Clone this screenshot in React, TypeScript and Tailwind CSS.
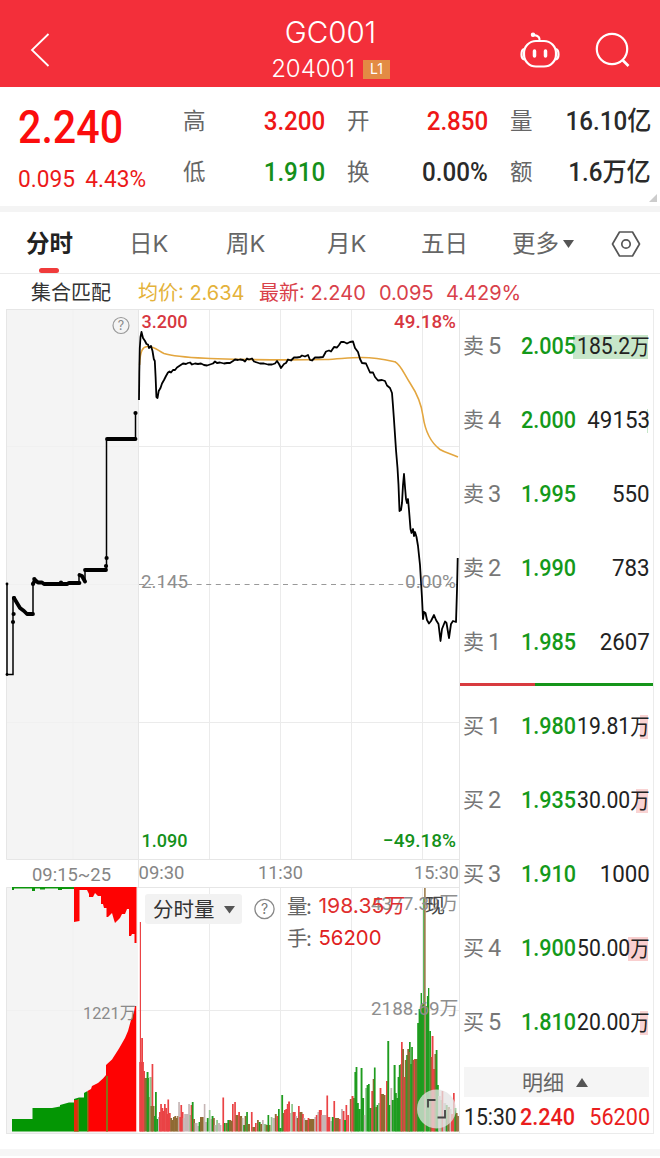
import React from "react";

const UI = "font-['Inter','Noto_Sans_CJK_SC',sans-serif]";
const NUM = "font-['Roboto','Noto_Sans_CJK_SC',sans-serif]";

const BAR_COLORS: Record<string, string> = {
  r: "#ea4345",
  g: "#1f9c1f",
  b: "#8f6a33",
  n: "#c6b6b6",
  l: "#8fc88f",
};

/* x, top, width, colour */
type Bar = [number, number, number, string];

const volumeBars: Bar[] = [
  [139.2, 1062, 4.2, "r"], [139.8, 922, 1.2, "r"], [141.2, 1038, 1.3, "r"], [143.2, 1071, 1.3, "r"],
  [144.3, 1078, 2.6, "b"], [146.6, 1072, 1.4, "g"], [148, 1097, 1.6, "b"], [149.4, 1077, 1.8, "l"],
  [147, 1078, 1.4, "g"], [151.6, 1064, 1.2, "r"], [150.4, 1106, 3.6, "b"], [155, 1092, 1.3, "g"],
  [154, 1116, 1.4, "g"], [156.3, 1119, 1.7, "g"], [158, 1117, 1.4, "n"], [159, 1112, 1.4, "r"],
  [160.2, 1104, 1.2, "r"], [161.3, 1108, 1.5, "r"], [162.8, 1111, 1.4, "r"], [164, 1104, 1.2, "r"],
  [165.2, 1108, 1.5, "r"], [166.6, 1114, 1.3, "r"], [167.4, 1099.5, 1.2, "r"], [168.6, 1113, 1.6, "r"],
  [170.2, 1118, 1.4, "b"], [171.6, 1120, 1.4, "b"], [173, 1117, 1.4, "b"], [174.4, 1116, 1.4, "b"],
  [175.8, 1118, 1.4, "b"], [177.2, 1116, 1.3, "b"], [178.2, 1102, 1.2, "n"], [179.3, 1117, 1.4, "r"],
  [180.4, 1105, 1.2, "r"], [181.6, 1112, 1.4, "r"], [182.8, 1118, 1.4, "n"], [184.2, 1114, 4, "n"],
  [188.2, 1104, 1.2, "n"], [189.4, 1115, 1.4, "l"], [190.6, 1105, 1.2, "r"], [191.8, 1102, 1.3, "g"],
  [193.1, 1119, 1.4, "b"], [194.5, 1123, 2.6, "n"], [197.2, 1126, 1.4, "n"], [198.6, 1122, 1.4, "g"],
  [200, 1117, 3.2, "b"], [203.8, 1104, 1.1, "n"], [205, 1122, 1.5, "n"], [206.8, 1118, 1.4, "g"],
  [208.8, 1110, 1.2, "l"], [210.2, 1119, 1.4, "n"], [211.6, 1116, 1.4, "g"], [213, 1118, 1.3, "b"],
  [214.4, 1125, 1.8, "n"], [216.2, 1120, 1.3, "l"], [217.6, 1123, 2, "n"], [219.6, 1125, 1.3, "n"],
  [222.4, 1097.5, 1.2, "r"], [224, 1123, 1.2, "g"], [225.8, 1123, 1.5, "b"], [227.4, 1120, 1.5, "g"],
  [229, 1120, 1.8, "b"], [232, 1104, 1.2, "r"], [231, 1121, 1.2, "b"], [234.2, 1102, 1.2, "r"],
  [235.6, 1115, 2.6, "b"], [238.2, 1112, 1.3, "r"], [239.6, 1116, 2, "b"], [241.8, 1118, 1.2, "n"],
  [243.2, 1125, 1.4, "g"], [244.6, 1116, 1.3, "b"], [246.2, 1112, 1.2, "g"], [247.5, 1124, 2, "b"],
  [250.9, 1112, 1.2, "r"], [252.3, 1127, 2.6, "b"], [255, 1123, 1.2, "r"], [257, 1120, 1.3, "b"],
  [258.7, 1122, 1.4, "g"], [260.2, 1124, 1.3, "b"], [262, 1120, 1.2, "n"], [263.6, 1124, 2.4, "l"],
  [265.6, 1125, 4.5, "b"], [267.5, 1115, 1.2, "g"], [270.7, 1117, 1.2, "l"], [272.4, 1118, 2, "n"],
  [274.8, 1114, 1.4, "b"], [276.4, 1116, 1.4, "r"], [278, 1109, 1.2, "g"], [279.3, 1128, 1.7, "g"],
  [281.3, 1095, 1.3, "g"], [282.7, 1113, 1.3, "b"], [284, 1110, 1.4, "r"], [285.4, 1109, 1.6, "r"],
  [286.8, 1104, 1.2, "r"], [288.1, 1101.5, 1.4, "r"], [290, 1113, 1.2, "n"], [291.2, 1104, 1.3, "l"],
  [292.6, 1112, 2.6, "r"], [295.4, 1116, 1.3, "n"], [296.7, 1118, 1.3, "b"], [298, 1106, 1.2, "r"],
  [299.3, 1112, 2.7, "b"], [302, 1114, 1.3, "r"], [303.4, 1118, 1.3, "n"], [304.8, 1120, 2.7, "b"],
  [307.6, 1118, 1.3, "r"], [309, 1119, 5.2, "b"], [314.4, 1117, 1.3, "n"], [315.8, 1115, 1.4, "r"],
  [317.4, 1112, 1.4, "n"], [318.8, 1110, 2.6, "r"], [321.4, 1115, 4.6, "n"], [326.4, 1095.5, 1.2, "r"],
  [327.8, 1117, 2, "r"], [330, 1121, 1.8, "n"], [333.4, 1101, 1.2, "r"], [331.8, 1117, 1.4, "g"],
  [335, 1118, 3.6, "b"], [338.8, 1119, 1.4, "r"], [341, 1109, 1.4, "n"], [342.6, 1111, 1.4, "r"],
  [345.5, 1105, 1.2, "r"], [344.1, 1120, 1.4, "g"], [347.2, 1115, 1.3, "r"], [349.8, 1099, 1.4, "b"],
  [351.5, 1096, 1.5, "r"], [353, 1098, 1.4, "b"], [354.4, 1072, 1.2, "g"], [355.6, 1067, 1.3, "g"],
  [356.9, 1103, 1.4, "g"], [358.2, 1109, 2, "g"], [360.6, 1068, 1.4, "g"], [362, 1098, 1.6, "g"],
  [363.8, 1115, 1.4, "n"], [365.2, 1088, 1.4, "l"], [366.6, 1085, 1.4, "g"], [368, 1084, 1.2, "g"],
  [369.3, 1108, 2, "g"], [371.3, 1091, 1.3, "r"], [372.7, 1079, 1.3, "b"], [373.9, 1067.5, 1.2, "g"],
  [375.2, 1107, 1.4, "b"], [376.6, 1105, 1.4, "g"], [378, 1103, 1.4, "l"], [379.6, 1088, 1.3, "r"],
  [380.9, 1094, 2.6, "b"], [383.5, 1095, 1.5, "b"], [386, 1081, 1.3, "r"], [387.3, 1041, 1.4, "g"],
  [388.7, 1105, 1.4, "g"], [390.4, 1088, 1.3, "n"], [391.8, 1100, 1.5, "g"], [393.6, 1065, 1.5, "g"],
  [395, 1093, 1.3, "g"], [396.3, 1098, 1.4, "g"], [397.6, 1077, 1.3, "g"], [398.8, 1065, 1.5, "g"],
  [400.3, 1064, 1.2, "b"], [401, 1042, 1.2, "r"], [402.1, 1049, 1.4, "b"], [403.4, 1077, 1.6, "r"],
  [404.8, 1060, 1.4, "b"], [406.2, 1055, 1.3, "g"], [407.3, 1049, 1.4, "b"], [409, 1042, 1.2, "g"],
  [408.3, 1052, 1.2, "b"], [410.2, 1064, 1.2, "g"], [411.2, 1047, 1.2, "g"], [412.4, 1060, 1.5, "b"],
  [413.8, 1059, 1.3, "r"], [415, 1059, 2.4, "b"], [417.2, 1023, 1.6, "g"], [418.6, 1009, 2, "g"],
  [420.6, 993, 1.4, "g"], [421.8, 1004, 1.6, "g"], [423.3, 897, 1, "g"], [424.2, 888, 1.4, "b"],
  [425.7, 1006, 1.2, "g"], [426.9, 996, 1.2, "g"], [428, 988, 1.3, "g"], [429.2, 1031, 1.3, "g"],
  [430.3, 1057, 1.2, "b"], [431.6, 1036, 1.4, "r"], [432.8, 1069, 1.8, "r"], [434.4, 1054, 1.4, "b"],
  [435.7, 1050, 1.3, "g"], [437, 1085, 1.3, "g"], [438.2, 1096, 2, "n"], [440.2, 1100, 1.4, "l"],
  [441.6, 1091, 1.2, "r"], [442.9, 1103, 2.8, "n"], [445.7, 1105, 1.5, "g"], [447.3, 1107, 2.2, "b"],
  [449.5, 1109, 1.5, "n"], [451, 1114, 1.6, "r"], [453, 1093, 1.2, "r"], [454.3, 1108, 1.4, "g"],
  [455.7, 1113, 1.4, "b"], [457.2, 1116, 1.2, "b"],
];

const priceLine =
  "139,400 139.3,372 139.8,348 140.5,337 141.5,332 143,338 145,341 146.5,344 148,344.5 149,348 151,346 152.5,351 153.8,359 154.8,361 155.6,377 156.4,397 157.5,398 158.7,391 160.5,388 162,383.5 164,380 166,376 168,372.5 169.5,371.5 171,372.5 173,370 175,370 177,367.5 180,365.5 183,363.5 186,364 188,363 190,362.5 192,364.5 195,363.5 198,364 201,363.5 204,365 207,365.5 210,364.5 213,363.5 215,361.5 217,363 220,362.5 224,363.5 227,363 230,363 233,361 235,359.5 238,360 240,359.5 243,360 245,361.5 247,358.5 249,359.5 252,358.5 254,361.5 257,362.5 260,363.5 264,363.5 268,364.5 272,364.5 275,363.5 277,361 279,364 281,368 284,364 286,363 288,359.5 291,360.5 294,357.5 297,357.5 300,357 302,355.5 305,356.5 308,355 310,360 312,360.5 315,357.5 319,357.5 323,357 326,351.5 329,350.5 331,351.5 334,347 337,347.5 339,345 341,342 344,342 347,343.5 350,342 353,341.5 355,348 358,352 360,359 362,363 366,363.5 368,368 370,372.5 373,372.5 375,377 378,380.5 382,380 385,381 387,385.5 390,388 392,393 393,406 394,420 396,450 397.5,468 398.5,485 399.5,511 401,510 402,503 403,485 404,474 405,487 406,499 407,503 408,499 409,510 410.5,529 411.5,533 413,529 414,536 415,532 416.5,537 418,546 420,565 422,598 423,619 424,612 425.5,613 427,620 429,623.5 431,621 434,615 436,620 438.5,624 440.5,641 442,629 445,621.5 446.5,623 449,638 451,624 453,621 456,622 457,590 457.7,558";

const avgLine =
  "M139.6 365C140 350 143 347 147 346.5C155 346 158 351 164 353.5C175 357 190 357.5 210 358.5C240 359.5 300 360 325 359.5C340 359 348 357.5 362 357.5C377 357.5 387 360 395 361.8C401 365 404 374 410 383C416 392 421 401 423 416C426 437 434 445 440 449.5C446 453 450 453.5 458 457";

function Label(props: {
  x: number; y: number; w: number; size: number; fill: string; children: string; weight?: number;
}) {
  return (
    <text
      x={props.x}
      y={props.y}
      textLength={props.w}
      lengthAdjust="spacingAndGlyphs"
      fontSize={props.size}
      fontWeight={props.weight ?? 400}
      fill={props.fill}
      className="font-['Roboto','Noto_Sans_CJK_SC',sans-serif]"
    >
      {props.children}
    </text>
  );
}

function Chart() {
  const dots = [[7, 584], [7, 674.5], [13, 622], [13.6, 614], [14, 598], [33, 584], [34.3, 579], [61, 582.5], [106, 566], [106.6, 558], [135.5, 413]];
  return (
    <svg width="460" height="826" viewBox="0 309 460 826" className="block shrink-0">
      <rect x="6" y="309" width="132" height="550" fill="#f4f4f4" />
      <rect x="6" y="887" width="132" height="246" fill="#f4f4f4" />
      <g stroke="#ebebeb" strokeWidth="1" fill="none">
        <path d="M138 446.5H459M138 722.5H459M138 1010.5H459M209.5 309V859M280.5 309V859M351.5 309V859M422.5 309V859M209.5 887V1133M280.5 887V1133M351.5 887V1133M422.5 887V1133" />
        <path d="M6 446.5H138M6 584.5H138M6 722.5H138M6 1010.5H138M73 309V859M73 887V1133" stroke="#f0f0f0" />
        <path d="M6.5 309V859.5H460M6 309.5H460M6.5 1133V887.5H460M6 1133.5H460M138.5 309V887M459.5 309V1133" stroke="#e6e6e6" />
      </g>

      <path d="M139 584.5H458" stroke="#999" strokeWidth="1.2" strokeDasharray="5 4.6" />
      <path d={avgLine} fill="none" stroke="#e3a63f" strokeWidth="1.6" />
      <polyline points={priceLine} fill="none" stroke="#000" strokeWidth="1.8" strokeLinejoin="round" />

      <path d="M7 584V674.5H13V598M33 614V583M79 582V575M85 581V570M106.5 570V439M135.5 439V413" fill="none" stroke="#000" strokeWidth="1.5" />
      <path d="M14 598L17 603L20 608L24 611L27 614H33M33.5 583L35 580L38 582.5H42L44 584H67L69 583H79.5M79.5 575L82 576L85 581.5M85 570H106M107 439H135.5" fill="none" stroke="#000" strokeWidth="3.8" strokeLinejoin="round" strokeLinecap="round" />
      {dots.map(([x, y], i) => <circle key={i} cx={x} cy={y} r={i < 2 ? 1.4 : 2.1} />)}

      <circle cx="121" cy="325.5" r="8" fill="none" stroke="#999" strokeWidth="1.2" />
      <text x="121" y="330" textAnchor="middle" fontSize="12.5" fill="#888" className="font-['Inter',sans-serif]">?</text>

      <Label x={141.5} y={328} w={46} size={19} fill="#d7373f" weight={500}>3.200</Label>
      <Label x={394} y={328} w={62} size={19} fill="#d7373f" weight={500}>49.18%</Label>
      <Label x={141} y={587.5} w={47} size={19} fill="#8e8e8e">2.145</Label>
      <Label x={405} y={587.5} w={51} size={19} fill="#8e8e8e">0.00%</Label>
      <Label x={141.5} y={847} w={46} size={19} fill="#14911a" weight={500}>1.090</Label>
      <Label x={383} y={847} w={73} size={19} fill="#14911a" weight={500}>−49.18%</Label>
      <Label x={32} y={881} w={79} size={19} fill="#858585">09:15~25</Label>
      <Label x={138.5} y={879} w={46} size={19} fill="#858585">09:30</Label>
      <Label x={258} y={879} w={45} size={19} fill="#858585">11:30</Label>
      <Label x={414} y={879} w={45} size={19} fill="#858585">15:30</Label>

      <path d="M12 887H75V889H62V890H58V888.5H45V889.5H40V888.5H35V891H32V888.5H14V890H12Z" fill="#0c950c" />
      <path d="M74 887H136.5V943H134.5V934H132L131 936H129V909H127L125 914H122L120 918L117 921L115 923L114 920L112 913L108 917H106.500V908H104L103 904H101V896H98L95 893L93 897H89V894L87 890H79.500V921L74 922Z" fill="#fe0202" />
      <path d="M12 1131.500V1119H32.500V1108H52L60 1106.500V1105L69 1102.500H74V1099L79 1097.500H84V1093L87.500 1091V1131.500Z" fill="#049604" />
      <path d="M87.500 1131.500V1091L91 1089L92 1086L98 1083L103 1078.500L106 1075V1065L112 1059.500L119 1048.500L125 1038L128 1031L131 1020L134 1012L135 1006H136.500V1131.500Z" fill="#fe0202" />
      <path d="M74 1100H78V1131.500H74Z" fill="#e5290b" />
      <path d="M106 1076H108V1131.500H106ZM87 1092H88.500V1131.500H87ZM77.600 1099H79V1131.500H77.600Z" fill="#887016" />
      <path d="M137 1006V1133" stroke="#fff" strokeWidth="1" />
      {volumeBars.map(([x, y, w, c], i) => (
        <rect key={i} x={x} y={y} width={w + (y > 1000 ? 0.5 : 0)} height={1131.5 - y} fill={BAR_COLORS[c]} />
      ))}

      <rect x="145" y="894" width="97" height="30" rx="3" fill="#f2f2f2" />
      <Label x={153} y={917} w={61.5} size={20.5} fill="#333">分时量</Label>
      <path d="M224 906H235L229.500 913.500Z" fill="#555" />
      <circle cx="264.500" cy="909" r="9.600" fill="none" stroke="#888" strokeWidth="1.3" />
      <text x="264.500" y="914" textAnchor="middle" fontSize="14" fill="#777" className="font-['Inter',sans-serif]">?</text>

      <Label x={83} y={1019} w={53} size={17} fill="#8a8a8a">1221万</Label>
      <Label x={371} y={909.5} w={87.5} size={19} fill="#8e8e8e">4377.39万</Label>
      <Label x={371} y={1014.5} w={87.500} size={19} fill="#8e8e8e">2188.69万</Label>
      <g className="font-['Inter','Noto_Sans_CJK_SC',sans-serif]" fontSize="20.500">
        <text x="287" y="914" fill="#666" textLength="25">量:</text>
        <text x="318.500" y="913" fill="#df2e2e" textLength="87" lengthAdjust="spacingAndGlyphs">198.35万</text>
        <text x="425" y="913" fill="#444" fontSize="20">现</text>
        <text x="287" y="946" fill="#666" textLength="25">手:</text>
        <text x="318.500" y="945" fill="#df2020" textLength="63" lengthAdjust="spacingAndGlyphs">56200</text>
      </g>

      <circle cx="436.500" cy="1109" r="19.500" fill="#e3e3e3" fillOpacity="0.76" />
      <path d="M428 1107.500V1100H435.500M445 1110V1117.500H437.500" fill="none" stroke="#444" strokeWidth="1.8" />
    </svg>
  );
}

type Order = [string, string, string, string];
const sells: Order[] = [
  ["卖", "5", "2.005", "185.2万"], ["卖", "4", "2.000", "49153"], ["卖", "3", "1.995", "550"],
  ["卖", "2", "1.990", "783"], ["卖", "1", "1.985", "2607"],
];
const buys: Order[] = [
  ["买", "1", "1.980", "19.81万"], ["买", "2", "1.935", "30.00万"], ["买", "3", "1.910", "1000"],
  ["买", "4", "1.900", "50.00万"], ["买", "5", "1.810", "20.00万"],
];
const depth: Record<string, string> = {
  "2.005": "w-[75px] bg-[#c7e6c9]",
  "2.000": "w-[1px] bg-[#c7e6c9]",
  "1.980": "w-[8px] bg-[#f9d3d3]",
  "1.935": "w-[12px] bg-[#f9d3d3]",
  "1.900": "w-[20px] bg-[#f9cfcf]",
  "1.810": "w-[8px] bg-[#f9d3d3]",
};

function OrderRow({ o }: { o: Order }) {
  const wan = o[3].endsWith("万");
  return (
    <div className="relative flex h-[74px] items-center pl-[3px] pr-[3px]">
      {depth[o[2]] && <span className={`absolute right-[5px] top-[25px] h-[24px] ${depth[o[2]]}`} />}
      <span className="relative flex w-[58px] shrink-0 items-center text-[#777]">
        <span className={`${UI} pb-[3px] text-[21px] leading-none`}>{o[0]}</span>
        <span className={`${NUM} ml-[4px] text-[23.5px] leading-none`}>{o[1]}</span>
      </span>
      <span className={`${NUM} relative w-[56px] shrink-0 origin-left scale-x-[0.92] whitespace-nowrap text-[23.5px] font-medium leading-none text-[#14991a]`}>{o[2]}</span>
      <span className={`${NUM} relative ml-auto w-0 text-[23.5px] leading-none text-[#222]`}>
        <span className={`float-right origin-right whitespace-nowrap ${wan ? "scale-x-[0.9]" : "scale-x-[0.95]"}`}>
          {wan ? o[3].slice(0, -1) : o[3]}{wan && <span className="text-[21.5px]">万</span>}
        </span>
      </span>
    </div>
  );
}

function Stat({ label, value, color }: { label: string; value: string; color: string }) {
  return (
    <div className="flex h-[51px] items-center justify-between">
      <span className={`${UI} pt-[2px] text-[22.5px] leading-none text-[#666]`}>{label}</span>
      <span className={`${NUM} origin-right scale-x-[0.93] whitespace-nowrap text-[26px] font-medium leading-none ${color}`}>{value}</span>
    </div>
  );
}

export default function App() {
  return (
    <div className={`${UI} flex h-[1158px] w-[660px] flex-col overflow-hidden bg-white`}>
      <header className="flex h-[87px] shrink-0 items-center justify-between bg-[#f32f3a] pl-[29px] pr-[28px]">
        <svg width="110" height="40" viewBox="0 -1 110 40" fill="none" stroke="#fff" strokeWidth="1.8" className="overflow-visible">
          <path d="M19.500 9L3 25L19.500 41" />
        </svg>
        <div className="flex flex-col items-center pl-[2px] pt-[11px] text-white">
          <div className="text-[29.5px] font-light leading-[36px]">GC001</div>
          <div className="flex items-center gap-[8px] pt-[4px] leading-[30px]">
            <span className="text-[24px] font-light">204001</span>
            <span className="flex h-[19px] w-[27px] items-center justify-center bg-[#e38b44] text-[14px] leading-none">L1</span>
          </div>
        </div>
        <svg width="112" height="50" viewBox="520 18.500 112 50" fill="none" stroke="#fff" strokeWidth="2.200">
          <rect x="524" y="40.500" width="32" height="25.500" rx="12" />
          <path d="M539.500 40.500Q540.500 35.500 534 34.500" />
          <circle cx="533" cy="34.300" r="1.500" fill="#fff" stroke="#fff" strokeWidth="1.500" />
          <path d="M524 48.500Q521.500 49 521.500 54Q521.500 58.500 524.500 59M556 48.500Q558.500 49 558.500 54Q558.500 58.500 555.500 59" />
          <path d="M534.500 50.500V55.500M545.500 50.500V55.500" strokeWidth="3.500" strokeLinecap="round" />
          <circle cx="612" cy="48.500" r="15.200" />
          <path d="M622.500 59.500L628.500 65.500" strokeWidth="2.600" />
        </svg>
      </header>

      <section className="relative flex h-[119px] shrink-0 pl-[18px]">
        <div className="w-[165px] pt-[17px]">
          <div className={`${NUM} origin-left scale-x-[0.895] text-[46px] font-medium leading-[46px] text-[#fb0d0d]`}>2.240</div>
          <div className={`${NUM} flex origin-left scale-x-[0.945] gap-[11px] whitespace-nowrap pt-[17px] text-[24px] leading-[24px] text-[#ec1919]`}>
            <span>0.095</span><span>4.43%</span>
          </div>
        </div>
        <div className="w-[142px] pt-[8px]">
          <Stat label="高" value="3.200" color="text-[#ee1717]" />
          <Stat label="低" value="1.910" color="text-[#15901a]" />
        </div>
        <div className="ml-[22px] w-[141px] pt-[8px]">
          <Stat label="开" value="2.850" color="text-[#ee1717]" />
          <Stat label="换" value="0.00%" color="text-[#2a2a2a]" />
        </div>
        <div className="ml-[22px] w-[141px] pt-[8px]">
          <Stat label="量" value="16.10亿" color="text-[#2a2a2a]" />
          <Stat label="额" value="1.6万亿" color="text-[#2a2a2a]" />
        </div>
        <svg className="absolute bottom-[4px] right-[3px]" width="8" height="8"><path d="M8 0V8H0Z" fill="#ccc" /></svg>
      </section>

      <div className="h-[6px] shrink-0 bg-[#f4f4f4]" />

      <nav className="flex h-[62px] shrink-0 items-center border-b border-[#eaeaea] pt-[3px] text-[23.5px] leading-none text-[#666]">
        <div className="relative flex w-[129px] pl-[26px] font-bold text-[#222]">
          分时
          <span className="absolute left-[39px] top-[36px] h-[5px] w-[20px] rounded-full bg-[#f03b3b]" />
        </div>
        <div className="w-[97px]">日K</div>
        <div className="w-[101px]">周K</div>
        <div className="w-[94px]">月K</div>
        <div className="w-[91px]">五日</div>
        <div className="flex w-[99px] items-center gap-[4px]">
          更多
          <svg width="11" height="8"><path d="M0 0H11L5.500 8Z" fill="#555" /></svg>
        </div>
        <svg width="30" height="28" viewBox="0 0 30 28" fill="none" stroke="#555" strokeWidth="1.700">
          <path d="M8.500 2H21.500L28.500 14L21.500 26H8.500L1.500 14Z" strokeLinejoin="round" />
          <circle cx="15" cy="14" r="4.200" />
        </svg>
      </nav>

      <div className="flex h-[35px] shrink-0 items-center pl-[31px] pt-[3px] text-[20px] leading-none">
        <span className="w-[107px] text-[#333]">集合匹配</span>
        <span className="w-[121px] whitespace-nowrap text-[#e4b23a]">均价: 2.634</span>
        <span className="w-[120px] whitespace-nowrap text-[#d9414a]">最新: 2.240</span>
        <span className="w-[67px] text-[#d9414a]">0.095</span>
        <span className="text-[#d9414a]">4.429%</span>
      </div>

      <main className="flex h-[826px] shrink-0">
        <Chart />
        <aside className="flex h-[825px] w-[194px] flex-col border-b border-r border-t border-[#ebebeb]">
          {sells.map((o) => <OrderRow key={o[2]} o={o} />)}
          <div className="mb-[4px] mt-[3px] flex h-[3px] shrink-0">
            <span className="w-[75px] bg-[#d83b3f]" />
            <span className="flex-1 bg-[#15951a]" />
          </div>
          {buys.map((o) => <OrderRow key={o[2]} o={o} />)}
          <div className="ml-[4px] mr-[4px] mt-[7px] flex h-[30px] shrink-0 items-center justify-center gap-[12px] bg-[#f5f5f5] pr-[3px] text-[21px] leading-none text-[#666]">
            明细
            <svg width="12" height="9"><path d="M6 0L12 9H0Z" fill="#555" /></svg>
          </div>
          <div className={`${NUM} flex flex-1 items-center pl-[4px] pt-[6px] text-[23.5px] leading-none`}>
            <span className="w-[56px] origin-left scale-x-[0.9] whitespace-nowrap text-[#222]">15:30</span>
            <span className="w-[60px] origin-left scale-x-[0.92] font-medium text-[#ea1d1d]">2.240</span>
            <span className="ml-auto mr-[3px] origin-right scale-x-[0.92] text-[#ea1d1d]">56200</span>
          </div>
        </aside>
      </main>
      <div className="mt-[14px] h-[7px] shrink-0 bg-[#f6f6f6]" />
    </div>
  );
}
